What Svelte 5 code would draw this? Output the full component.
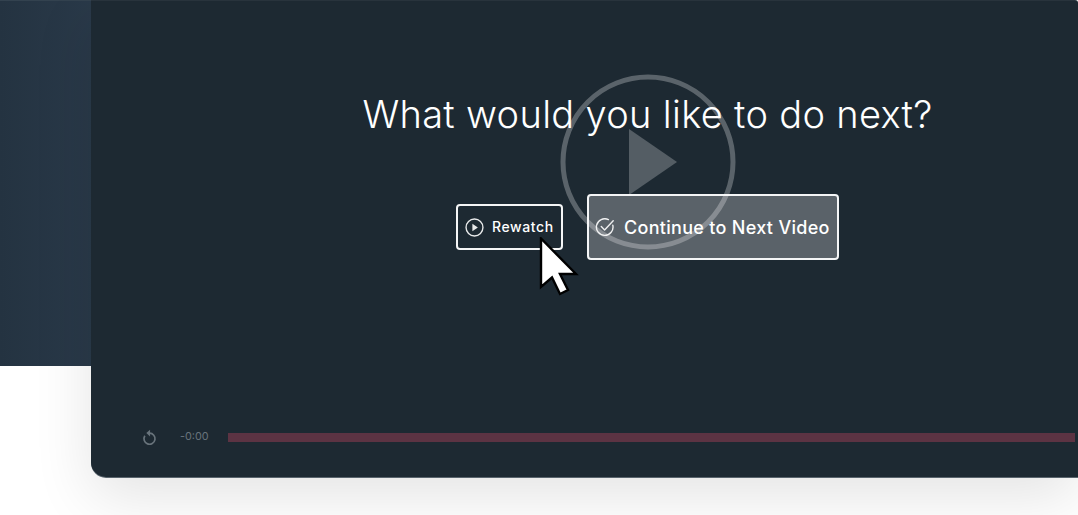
<script lang="ts">
	const title = 'What would you like to do next?';
	const remaining = '-0:00';
</script>

<div class="stage">
	<section class="player">
		<div class="end-screen">
			<h1>{title}</h1>
			<div class="actions">
				<button class="btn small">
					<svg class="icon" viewBox="0 0 18 18" fill="none" stroke="currentColor" stroke-width="1.3" aria-hidden="true">
						<circle cx="9" cy="9" r="8" />
						<path d="M7 5.4 12.2 9 7 12.6z" fill="currentColor" stroke="none" />
					</svg>
					<span>Rewatch</span>
				</button>
				<button class="btn large">
					<svg class="icon check" viewBox="0 0 20 20" fill="none" stroke="currentColor" stroke-width="1.4" stroke-linecap="round" stroke-linejoin="round" aria-hidden="true">
						<path d="M17.8 8.2A8.3 8.3 0 1 1 13.4 2.6" />
						<path d="M6.3 9.6 9.6 13 18.2 3.8" />
					</svg>
					Continue to Next Video
				</button>
			</div>

			<svg class="big-play" viewBox="0 0 176 176" aria-hidden="true">
				<circle cx="88" cy="88" r="85" fill="none" stroke="#fff" stroke-width="5" />
				<path d="M69 55 117 88 69 121z" fill="#fff" fill-opacity="0.9" />
			</svg>

			<svg class="cursor" viewBox="0 0 40 60" aria-hidden="true">
				<path d="M2 1.5V50L13 40.5 21 57 29 53 21 37H37z" fill="#fff" stroke="#000" stroke-width="2.4" stroke-linejoin="miter" />
			</svg>
		</div>

		<div class="controls">
			<svg class="replay" viewBox="0 0 16 18" fill="none" stroke="currentColor" stroke-width="1.8" aria-hidden="true">
				<path d="M3 7.2A5.9 5.9 0 1 0 8 4.4" />
				<path d="M8.6 0.6 4.6 4.2 8.6 7.8z" fill="currentColor" stroke="none" />
			</svg>
			<span class="time">{remaining}</span>
			<div class="track"></div>
		</div>
	</section>
</div>

<style>
	:global(body) {
		margin: 0;
		background: #fff;
	}

	.stage {
		width: 1078px;
		height: 515px;
		overflow: hidden;
		box-sizing: border-box;
		padding-left: 91px;
		background:
			linear-gradient(#33424f, #33424f) no-repeat 0 0 / 100px 1px,
			linear-gradient(90deg, #243341, #2a3a4a) no-repeat 0 0 / 100px 366px;
		font-family: Inter, 'Liberation Sans', sans-serif;
	}

	.player {
		position: relative;
		height: 477px;
		box-sizing: border-box;
		display: flex;
		flex-direction: column;
		background: #1d2932;
		border-radius: 0 3px 0 15px;
		box-shadow:
			inset 0 1px 0 rgba(255, 255, 255, 0.05),
			0 1px 0 #59646d,
			0 20px 60px rgba(0, 0, 0, 0.11);
	}

	.end-screen {
		position: relative;
		flex: 1;
		display: flex;
		flex-direction: column;
		align-items: center;
		padding: 91px 0 0 126px;
		color: #fff;
	}

	h1 {
		margin: 0;
		font-size: 38px;
		line-height: 46px;
		font-weight: 300;
		white-space: nowrap;
		position: relative;
		letter-spacing: 0.32px;
	}

	.actions {
		display: flex;
		align-items: center;
		gap: 24px;
		margin-top: 57px;
	}

	.btn {
		display: flex;
		align-items: center;
		box-sizing: border-box;
		border: 2px solid #f4f5f6;
		border-radius: 4px;
		color: #fff;
		font-family: inherit;
		font-weight: 500;
		white-space: nowrap;
		padding: 0;
	}

	.small {
		width: 107px;
		height: 46px;
		padding-left: 7px;
		gap: 8px;
		background: transparent;
		font-size: 14px;
		letter-spacing: 0.6px;
	}

	.small span {
		margin-bottom: 2px;
	}

	.large {
		width: 252px;
		height: 66px;
		padding-left: 6px;
		gap: 9px;
		background: rgba(255, 255, 255, 0.27);
		font-size: 18px;
		letter-spacing: 0.3px;
	}

	.icon {
		width: 19px;
		height: 19px;
		flex: none;
		opacity: 0.9;
	}

	.check {
		width: 20px;
		height: 20px;
	}

	.big-play {
		position: absolute;
		left: 469px;
		top: 74px;
		width: 176px;
		height: 176px;
		opacity: 0.27;
		pointer-events: none;
	}

	.cursor {
		position: absolute;
		left: 448px;
		top: 237px;
		width: 40px;
		height: 60px;
		pointer-events: none;
	}

	.controls {
		display: flex;
		align-items: center;
		height: 10px;
		padding: 0 3px 35px 51px;
		color: #68737b;
	}

	.replay {
		width: 15px;
		height: 17px;
		flex: none;
	}

	.time {
		margin: 0 0 2px 23px;
		width: 48px;
		flex: none;
		font-size: 10.8px;
	}

	.track {
		flex: 1;
		height: 9px;
		background: #5c3343;
	}
</style>
